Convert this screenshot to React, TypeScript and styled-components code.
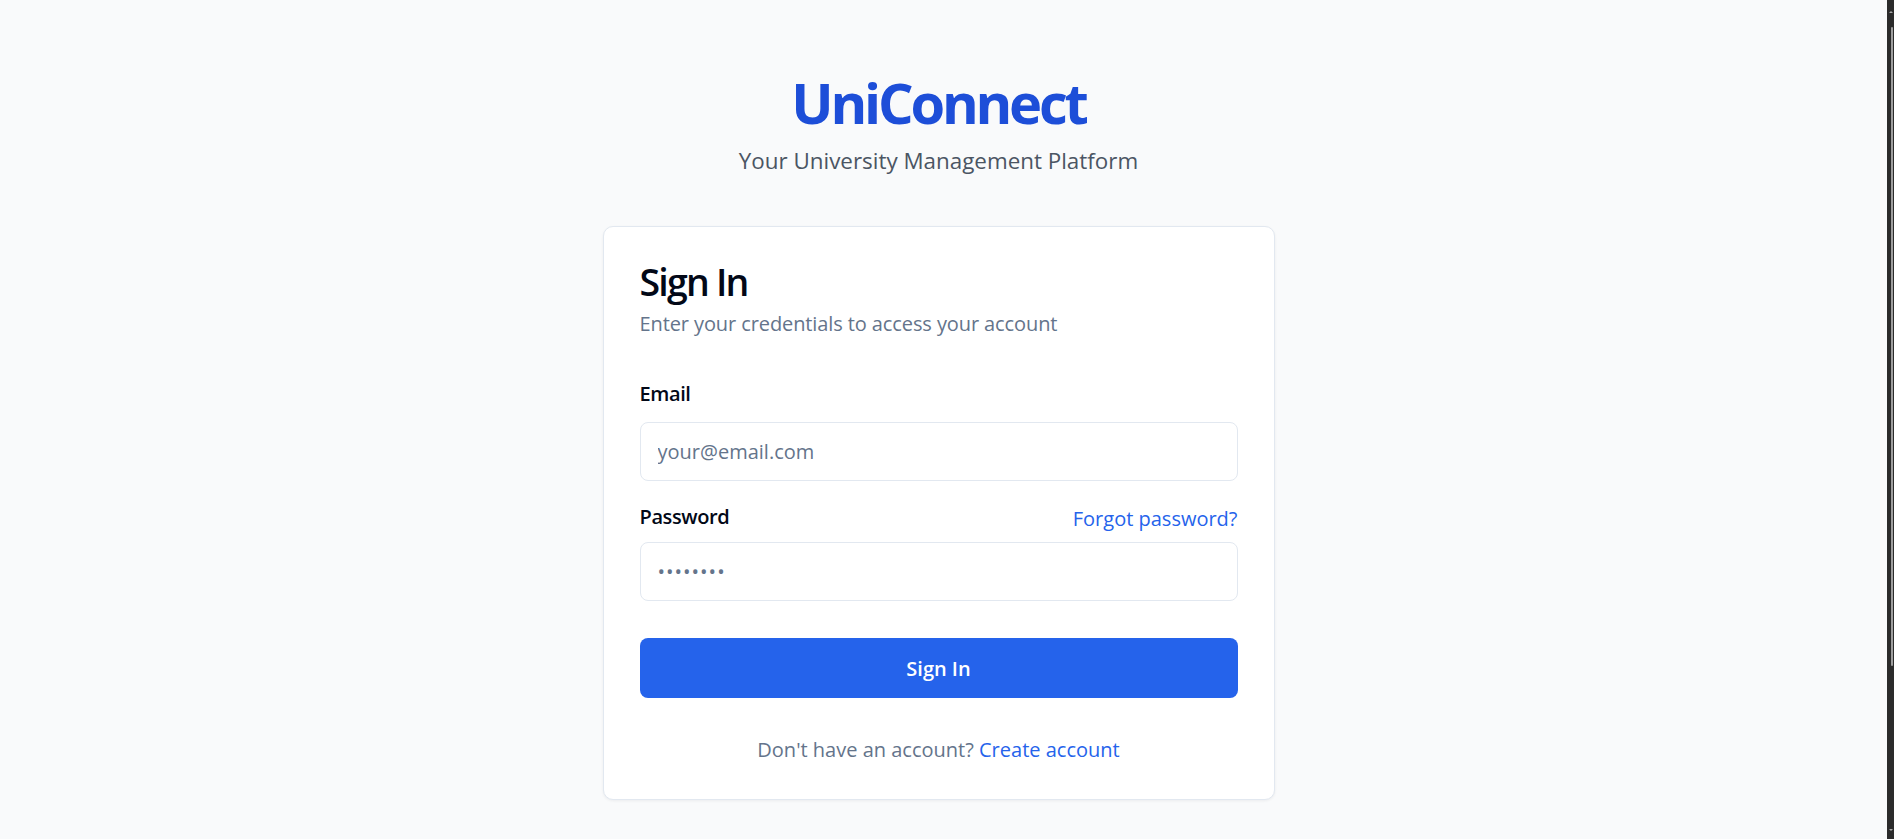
import React from "react";
import styled, { createGlobalStyle } from "styled-components";

const GlobalStyle = createGlobalStyle`
  html, body {
    margin: 0;
    padding: 0;
    background: #f9fafb;
  }
  body {
    font-family: "Open Sans", "Noto Sans", sans-serif;
    color: #020817;
  }
  *, *::before, *::after {
    box-sizing: border-box;
  }
`;

const Screen = styled.div`
  display: flex;
  height: 100vh;
  overflow: hidden;
  background: #f9fafb;
`;

const Main = styled.main`
  flex: 1;
  display: flex;
  flex-direction: column;
  align-items: center;
  padding-top: 68px;
`;

const ScrollRail = styled.div`
  width: 17px;
  display: flex;
  justify-content: flex-end;
`;

const Track = styled.div`
  width: 7px;
  height: 100%;
  background: #2b2b2b;
  display: flex;
  flex-direction: column;
  align-items: flex-end;
`;

const Arrow = styled.div<{ $down?: boolean }>`
  width: 0;
  height: 0;
  margin-right: 1px;
  border-left: 2px solid transparent;
  border-right: 2px solid transparent;
  ${(p) =>
    p.$down
      ? `border-top: 2px solid #a8a8a8; margin-top: auto; margin-bottom: 8px;`
      : `border-bottom: 2px solid #a8a8a8; margin-top: 11px;`}
`;

const Thumb = styled.div`
  width: 2px;
  height: 639px;
  margin-top: 14px;
  margin-right: 1px;
  border-radius: 1px;
  background: #9e9e9e;
`;

const Brand = styled.h1`
  margin: 0;
  font-size: 56px;
  line-height: 68px;
  font-weight: 700;
  letter-spacing: -3.2px;
  color: #1d4ed8;
`;

const Tagline = styled.p`
  margin: 10px 0 0;
  font-size: 22.4px;
  line-height: 30px;
  color: #4b5563;
`;

const Card = styled.section`
  margin-top: 50px;
  width: 672px;
  background: #ffffff;
  border: 1px solid #e2e8f0;
  border-radius: 10px;
  box-shadow: 0 1px 3px rgba(15, 23, 42, 0.06);
  padding: 32px 36px 35px;
`;

const Heading = styled.h2`
  margin: 0;
  font-size: 37.5px;
  line-height: 45px;
  font-weight: 600;
  letter-spacing: -1.8px;
  color: #020817;
`;

const Description = styled.p`
  margin: 6px 0 0;
  font-size: 20px;
  line-height: 28px;
  letter-spacing: -0.1px;
  color: #64748b;
`;

const Form = styled.form`
  display: flex;
  flex-direction: column;
`;

const Label = styled.label<{ $gap: number }>`
  display: block;
  margin-top: ${(p) => p.$gap}px;
  font-size: 20px;
  line-height: 28px;
  font-weight: 600;
  letter-spacing: -0.4px;
  color: #020817;
`;

const LabelRow = styled.div`
  margin-top: 22px;
  display: flex;
  justify-content: space-between;
  align-items: flex-start;
`;

const TextLink = styled.a<{ $shift?: number }>`
  color: #2563eb;
  text-decoration: none;
  font-size: 20px;
  line-height: 28px;
  padding-top: ${(p) => p.$shift ?? 0}px;
  cursor: pointer;
`;

const Input = styled.input<{ $gap: number; $spaced?: boolean }>`
  display: block;
  width: 100%;
  height: 59px;
  margin-top: ${(p) => p.$gap}px;
  padding: 0 17px;
  border: 1px solid #e2e8f0;
  border-radius: 8px;
  background: #ffffff;
  font-family: inherit;
  font-size: 20px;
  letter-spacing: ${(p) => (p.$spaced ? "1px" : "0")};
  color: #020817;
  outline: none;

  &::placeholder {
    color: #64748b;
    opacity: 1;
  }
`;

const SubmitButton = styled.button`
  margin-top: 37px;
  height: 60px;
  width: 100%;
  border: none;
  border-radius: 8px;
  background: #2563eb;
  color: #ffffff;
  font-family: inherit;
  font-size: 20px;
  font-weight: 600;
  cursor: pointer;
`;

const Footer = styled.p`
  margin: 38px 0 0;
  text-align: center;
  font-size: 20px;
  line-height: 28px;
  color: #64748b;
`;

export default function App() {
  return (
    <>
      <GlobalStyle />
      <Screen>
        <Main>
          <Brand>UniConnect</Brand>
          <Tagline>Your University Management Platform</Tagline>
          <Card>
            <Heading>Sign In</Heading>
            <Description>Enter your credentials to access your account</Description>
            <Form onSubmit={(e) => e.preventDefault()}>
              <Label $gap={42} htmlFor="email">
                Email
              </Label>
              <Input $gap={14} id="email" type="email" placeholder="your@email.com" />
              <LabelRow>
                <Label $gap={0} htmlFor="password">
                  Password
                </Label>
                <TextLink $shift={2}>Forgot password?</TextLink>
              </LabelRow>
              <Input $gap={9} $spaced id="password" type="password" placeholder="••••••••" />
              <SubmitButton type="submit">Sign In</SubmitButton>
            </Form>
            <Footer>
              Don't have an account? <TextLink>Create account</TextLink>
            </Footer>
          </Card>
        </Main>
        <ScrollRail>
          <Track>
            <Arrow />
            <Thumb />
            <Arrow $down />
          </Track>
        </ScrollRail>
      </Screen>
    </>
  );
}
